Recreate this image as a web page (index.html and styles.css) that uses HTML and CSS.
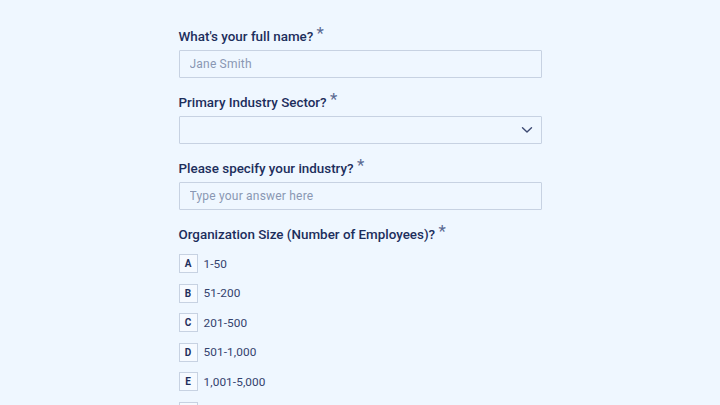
FILE: index.html
```html
<!DOCTYPE html>
<html>
<head>
    <meta charset="UTF-8">
    <title>Company Profile</title>
    <link rel="stylesheet" href="styles.css">
</head>
<body>

<form class="survey">
    <div class="field">
        <label class="question" for="fullName">What's your full name? <span class="req">*</span></label>
        <input id="fullName" class="text-input" type="text" placeholder="Jane Smith">
    </div>

    <div class="field">
        <label class="question" for="sector">Primary Industry Sector? <span class="req">*</span></label>
        <div class="select-wrap">
            <select id="sector" class="text-input select-input">
                <option value=""></option>
            </select>
            <svg class="chevron" width="12" height="8" viewBox="0 0 12 8">
                <path d="M1.5 1.8 L6 6 L10.5 1.8" fill="none" stroke="#3d4a72" stroke-width="1.4" stroke-linecap="round" stroke-linejoin="round"/>
            </svg>
        </div>
    </div>

    <div class="field">
        <label class="question" for="industry">Please specify your industry? <span class="req">*</span></label>
        <input id="industry" class="text-input" type="text" placeholder="Type your answer here">
    </div>

    <div class="field">
        <p class="question">Organization Size (Number of Employees)? <span class="req">*</span></p>
        <ul class="choices">
            <li><span class="key">A</span>1-50</li>
            <li><span class="key">B</span>51-200</li>
            <li><span class="key">C</span>201-500</li>
            <li><span class="key">D</span>501-1,000</li>
            <li><span class="key">E</span>1,001-5,000</li>
            <li><span class="key">F</span>5,001+</li>
        </ul>
    </div>
</form>

</body>
</html>
```

FILE: styles.css
```css
body {
    background: #eff7ff;
    margin: 0;
    font-family: Roboto, "Liberation Sans", sans-serif;
    color: #1f2f5c;
    height: 405px;
    overflow: hidden;
}
.survey {
    width: 363px;
    margin: 0 auto;
    padding-top: 27px;
}
.field {
    margin-bottom: 15px;
}
.question {
    display: block;
    margin: 0 0 3px;
    font-size: 13.4px;
    font-weight: 500;
    line-height: 20px;
    color: #1d2e5c;
}
.req {
    font-size: 17px;
    font-weight: 400;
    color: #5a6a92;
    vertical-align: top;
    position: relative;
    top: -4px;
}
.text-input {
    display: block;
    box-sizing: border-box;
    width: 100%;
    height: 28px;
    margin: 0;
    padding: 0 10px;
    border: 1px solid #c7d2e2;
    border-radius: 1px;
    background: #eff7ff;
    font-family: inherit;
    font-size: 12px;
    letter-spacing: 0.2px;
    color: #1f2f5c;
    outline: none;
}
.text-input::placeholder {
    color: #8a97b3;
}
.select-wrap {
    position: relative;
}
.select-input {
    appearance: none;
    -webkit-appearance: none;
}
.chevron {
    position: absolute;
    right: 9px;
    top: 10px;
    pointer-events: none;
}
.choices {
    list-style: none;
    padding: 0;
    margin: 9px 0 0;
}
.choices li {
    display: flex;
    align-items: center;
    height: 19px;
    margin-bottom: 10.6px;
    font-size: 11.8px;
    letter-spacing: 0.1px;
    color: #34426d;
}
.key {
    display: inline-flex;
    align-items: center;
    justify-content: center;
    box-sizing: border-box;
    width: 19px;
    height: 19px;
    margin-right: 6px;
    border: 1px solid #c7d2e2;
    background: #f6faff;
    font-size: 10px;
    font-weight: 700;
    letter-spacing: 0;
    color: #1f2f5c;
}
```
